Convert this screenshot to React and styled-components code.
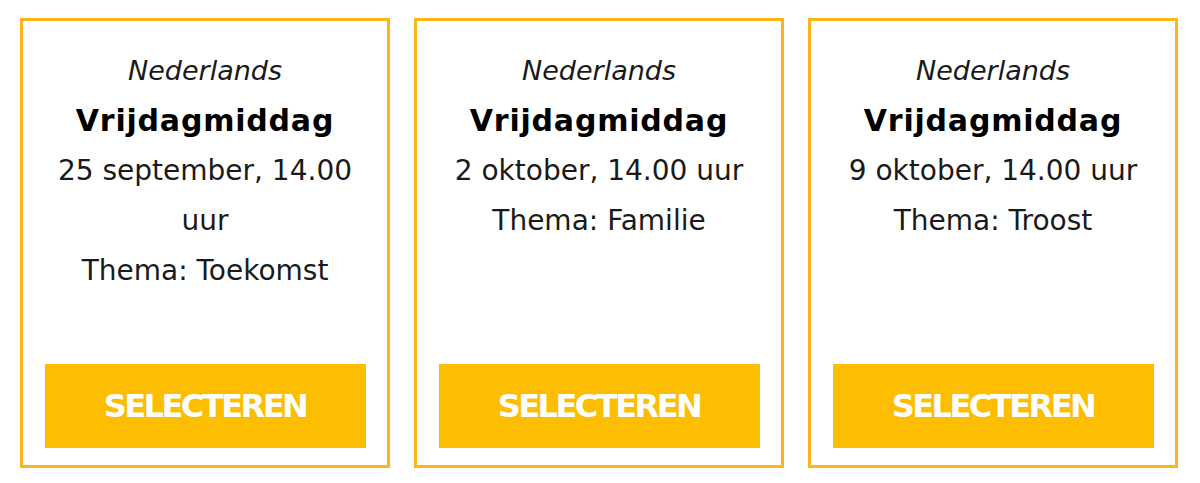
import styled, { createGlobalStyle } from "styled-components";

const Global = createGlobalStyle`
  body {
    margin: 0;
    background: #ffffff;
    font-family: "DejaVu Sans", "Liberation Sans", sans-serif;
    color: #1a1a1a;
  }
`;

const Row = styled.div`
  display: flex;
  gap: 24px;
  padding: 18px 20px 15px 20px;
`;

const Card = styled.div`
  width: 370px;
  height: 450px;
  box-sizing: border-box;
  border: 3px solid #fbb41a;
  display: flex;
  flex-direction: column;
  align-items: center;
  padding: 25px 22px 17px 22px;
  text-align: center;
`;

const Lang = styled.div`
  font-style: italic;
  font-size: 27px;
  line-height: 50px;
`;

const Title = styled.div`
  font-weight: 700;
  font-size: 30px;
  letter-spacing: 0.8px;
  line-height: 50px;
  color: #000;
`;

const Line = styled.div`
  font-size: 28px;
  line-height: 50px;
  font-weight: 400;
`;

const Button = styled.button`
  margin-top: auto;
  width: 321px;
  height: 84px;
  border: none;
  background: #fdbd00;
  color: #ffffff;
  font-family: "DejaVu Sans", "Liberation Sans", sans-serif;
  font-weight: 700;
  font-size: 32px;
  letter-spacing: -2.5px;
  cursor: pointer;
`;

const events = [
  { date: "25 september, 14.00 uur", theme: "Toekomst" },
  { date: "2 oktober, 14.00 uur", theme: "Familie" },
  { date: "9 oktober, 14.00 uur", theme: "Troost" },
];

const App = () => {
  return (
    <>
      <Global />
      <Row>
        {events.map((e) => (
          <Card key={e.date}>
            <Lang>Nederlands</Lang>
            <Title>Vrijdagmiddag</Title>
            <Line>{e.date}</Line>
            <Line>Thema: {e.theme}</Line>
            <Button>SELECTEREN</Button>
          </Card>
        ))}
      </Row>
    </>
  );
};

export default App;
